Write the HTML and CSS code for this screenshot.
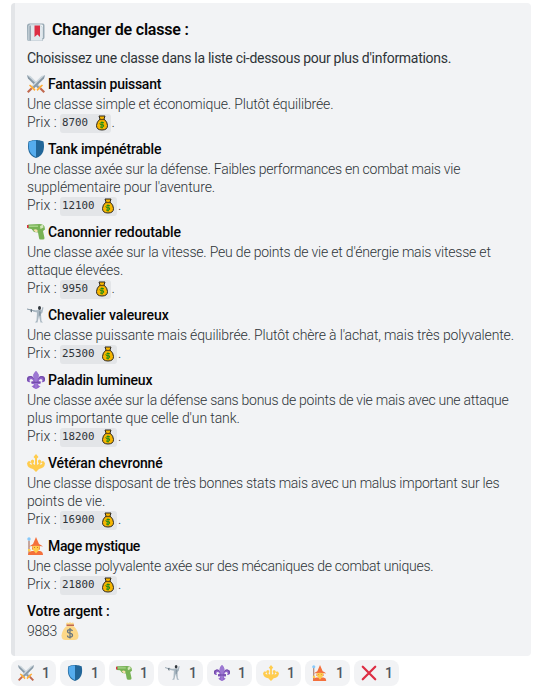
FILE: index.html
```html
<!DOCTYPE html>
<html lang="fr">
<head>
<meta charset="utf-8">
<title>Changer de classe</title>
<link rel="stylesheet" href="styles.css">
</head>
<body>
<svg class="sprite" aria-hidden="true">
<symbol id="book" viewBox="0 0 36 36"><path fill="#99aab5" d="M5 1h27q3 0 3 4v24q0 4-4 4v3H4q-4 0-4-4V6q0-5 5-5"/><path fill="#f5f8fa" d="M6 3h24q2 0 2 3v24H4V6q0-2 2-3"/><path fill="#bdc9d1" d="M2 5h25q4 0 4 4v27H5q-4 0-4-4z"/><path fill="#e1e8ed" d="M8 6h19q3 0 3 3v26H8z"/><path fill="#99aab5" d="M5 5h3v30H5z"/><path fill="#dd2e44" d="M15 5h11v23l-5-5-6 5z"/></symbol>
<symbol id="swords" viewBox="0 0 36 36"><g id="blade"><path fill="#ccd6dd" d="M0 0l7 2 20 20-5 5L2 7z"/><path fill="#8899a6" d="M0 0l25 24-3 3L2 7z"/><path fill="#c1694f" d="M25 28l3-3 8 8-3 3z"/><path fill="#ffac33" d="M19 29l2 3 4-4 4-4 3-3-2-2-4 3-4 4z"/></g><use href="#blade" transform="matrix(-1 0 0 1 36 0)"/></symbol>
<symbol id="shield" viewBox="0 0 36 36"><path fill="#226699" d="M33 3c-7-3-15-3-15-3S10 0 3 3C0 18 3 31 18 36c15-5 18-18 15-33z"/><path fill="#55acee" d="M18 1v33C6 29 2 20 4 4c5-2 9-3 14-3z"/></symbol>
<symbol id="gun" viewBox="0 0 36 36"><path fill="#77b255" d="M1 6Q0 4 3 3l22-1q8 0 10 5l1 6-4 3 3 14q0 3-3 3h-5q-3 0-3-3l-2-11-8-1-5-6-7-1z"/><path fill="#a6d388" d="M4 5h18v3H4z"/><path fill="#f9dfb0" d="M13 14q4-3 8 0v4q-4 2-8-4"/><path fill="#dd2e44" d="M0 4h3v6H0z"/><path fill="#d6e8bd" d="M26 6l6-3 1 6-6 3z"/></symbol>
<symbol id="fencer" viewBox="0 0 36 36"><path fill="#8899a6" d="M0 5l16 4v2L0 7z"/><path fill="#66757f" d="M7 7l3-1v7L7 11z"/><path fill="#aab8c2" d="M12 9l11-1h6l2-6 2 1-2 10-3 3 1 14 3 3h-5l-3-13-3 13h-5l3-4 1-16-8-2z"/><path fill="#8899a6" d="M24 10l4 2-1 8-3-1z"/><ellipse cx="25" cy="4" rx="3" ry="4" fill="#31373d"/></symbol>
<symbol id="lis" viewBox="0 0 36 36"><path fill="#9266cc" d="M18 0q-7 7-5 12l3 8q-3-11-10-10-7 1-6 8 1 6 7 4-4-4 1-6 4 0 5 5H9v5h5q-1 5-5 4 4 5 9 6 5-1 9-6-4 1-5-4h5v-5h-4q1-5 5-5 5 2 1 6 6 2 7-4 1-7-6-8-7-1-10 10l3-8q2-5-5-12"/><path fill="#744eaa" d="M0 18q-1-7 6-8 6-1 8 7-6-7-10-3-2 3 0 7-4 0-4-3m36 0q1-7-6-8-6-1-8 7 6-7 10-3 2 3 0 7 4 0 4-3M9 21h18v3H9z"/><path fill="#9c78d2" d="M18 0q-8 7-4 13l2 8h4l2-8q4-6-4-13m-3 24h6l-1 9-2 3-2-3z"/></symbol>
<symbol id="trident" viewBox="0 0 36 36"><path fill="#ffcc4d" d="M18 0l5 6-3 3v13q3-1 4-4l-2-1V13l3-2 3 2 1 3-2 2q0 2-1 4 4-1 5-4l-3 0 3-4 3 1 2 4q-1 9-12 11l-2 2-4 4-4-4-2-2Q1 28 0 19l2-4 3-1 3 4H5q1 3 5 4-1-2-1-4l-2-2 1-3 3-2 3 2v4l-2 1q1 3 4 4V9l-3-3z"/></symbol>
<symbol id="mage" viewBox="0 0 36 36"><path fill="#9a5a48" d="M3 7h2v29H3z"/><circle cx="4" cy="4" r="3.500" fill="#88c9f9"/><path fill="#f4703c" d="M2 36q0-7 8-8h16q6 1 6 8z"/><path fill="#e75a25" d="M11 17h14l1 8H10z"/><path fill="#ffcc4d" d="M11 17h14v4q0 8-7 8t-7-8z"/><path fill="#f4703c" d="M4 19q4-3 8-5l6-14 6 14q5 2 8 5-14-3-28 0"/><circle cx="15" cy="21" r="1" fill="#b55a2b"/><circle cx="21" cy="21" r="1" fill="#b55a2b"/><path fill="#ffcc4d" d="M14 28l4 5 4-5zM2 24h5v5H2z"/></symbol>
<symbol id="cross" viewBox="0 0 36 36"><path fill="none" stroke="#dd2e44" stroke-width="5" stroke-linecap="round" d="M4 4l28 28M32 4L4 32"/></symbol>
<symbol id="bag" viewBox="0 0 36 36"><path fill="#fdd888" d="M10 9q8-4 16 0 8 8 9 18 0 9-8 9H9q-8 0-8-9Q2 17 10 9"/><path fill="#fdd888" d="M11 6Q9 1 13 1q2 2 5-1 3 3 5 1 4 0 2 5z"/><path fill="#bf6952" d="M11 5h15v3H11z"/><path fill="none" stroke="#67757f" stroke-width="2.500" d="M23 18q-1-3-5-3-5 0-5 3.500 0 3.500 5 4t5 4-5 4-5-3.500M18 12v21"/></symbol>
<symbol id="coinbag" viewBox="0 0 12 16"><path fill="#f7b500" stroke="#2d2924" d="M3 1h6L8 4q3.500 3 3.500 6.500Q11.500 15 6 15T.5 10.500Q.5 7 4 4z"/><path stroke="#6b4c12" stroke-width="1.200" d="M3.500 4.500h5"/><path fill="none" stroke="#178a17" d="M8 7.800Q4 6.500 4 8.500t2 1.300 1.700 1.400Q7.500 13 4 12M6 6.500v7"/></symbol>
</svg>
<main class="embed">
<h1 class="title track-20"><svg class="emoji"><use href="#book"/></svg>Changer de classe :</h1>
<p class="intro track-29">Choisissez une classe dans la liste ci-dessous pour plus d'informations.</p>
<section class="field"><h2 class="track-27"><svg class="emoji"><use href="#swords"/></svg>Fantassin puissant</h2>
<p class="track-16">Une classe simple et économique. Plutôt équilibrée.</p><p class="price">Prix : <code>8700 <svg class="coin"><use href="#coinbag"/></svg></code>.</p></section>
<section class="field"><h2 class="track-16"><svg class="emoji"><use href="#shield"/></svg>Tank impénétrable</h2>
<p class="track-25">Une classe axée sur la défense. Faibles performances en combat mais vie<br><span class="track-11">supplémentaire pour l'aventure.</span></p><p class="price">Prix : <code>12100 <svg class="coin"><use href="#coinbag"/></svg></code>.</p></section>
<section class="field"><h2 class="track-8"><svg class="emoji"><use href="#gun"/></svg>Canonnier redoutable</h2>
<p class="track-20">Une classe axée sur la vitesse. Peu de points de vie et d'énergie mais vitesse et<br>attaque élevées.</p><p class="price">Prix : <code>9950 <svg class="coin"><use href="#coinbag"/></svg></code>.</p></section>
<section class="field"><h2 class="track-8"><svg class="emoji"><use href="#fencer"/></svg>Chevalier valeureux</h2>
<p class="track-15">Une classe puissante mais équilibrée. Plutôt chère à l'achat, mais très polyvalente.</p><p class="price">Prix : <code>25300 <svg class="coin"><use href="#coinbag"/></svg></code>.</p></section>
<section class="field"><h2 class="track-20"><svg class="emoji"><use href="#lis"/></svg>Paladin lumineux</h2>
<p class="track-27">Une classe axée sur la défense sans bonus de points de vie mais avec une attaque<br><span class="track-11">plus importante que celle d'un tank.</span></p><p class="price">Prix : <code>18200 <svg class="coin"><use href="#coinbag"/></svg></code>.</p></section>
<section class="field"><h2 class="track-15"><svg class="emoji"><use href="#trident"/></svg>Vétéran chevronné</h2>
<p class="track-25">Une classe disposant de très bonnes stats mais avec un malus important sur les<br><span class="track-16">points de vie.</span></p><p class="price">Prix : <code>16900 <svg class="coin"><use href="#coinbag"/></svg></code>.</p></section>
<section class="field"><h2 class="track-34"><svg class="emoji"><use href="#mage"/></svg>Mage mystique</h2>
<p class="track-25">Une classe polyvalente axée sur des mécaniques de combat uniques.</p><p class="price">Prix : <code>21800 <svg class="coin"><use href="#coinbag"/></svg></code>.</p></section>
<section class="field"><h2 class="track-15">Votre argent :</h2><p class="money track-27">9883 <svg class="emoji"><use href="#bag"/></svg></p></section>
</main>
<div class="reactions">
<div class="reaction"><svg><use href="#swords"/></svg>1</div><div class="reaction"><svg><use href="#shield"/></svg>1</div><div class="reaction"><svg><use href="#gun"/></svg>1</div><div class="reaction"><svg><use href="#fencer"/></svg>1</div><div class="reaction"><svg><use href="#lis"/></svg>1</div><div class="reaction"><svg><use href="#trident"/></svg>1</div><div class="reaction"><svg><use href="#mage"/></svg>1</div><div class="reaction"><svg><use href="#cross"/></svg>1</div>
</div>
</body>
</html>
```
FILE: styles.css
```css
* { box-sizing: border-box; }
body { margin: 0; padding: 3px 12px 0 11px; background: #fff; font-family: Roboto, "Liberation Sans", sans-serif; font-size: 14px; line-height: 18px; color: #2e3338; }
.sprite { display: none; }
.embed { height: 653px; padding: 16px 12px 16px; border-left: 4px solid #e3e5e8; border-radius: 4px; background: #f2f3f5; white-space: nowrap; }
h1, h2, p { margin: 0; }
.title { display: flex; align-items: center; gap: 7px; height: 22px; font-size: 16px; font-weight: 600; color: #060607; }
.title .emoji { margin-top: 4px; }
.intro { margin: 8px 0 8px; }
.emoji { width: 18px; height: 18px; flex: none; }
.field { margin-bottom: 9px; font-weight: 300; }
.field h2 { display: flex; align-items: center; gap: 3px; height: 18px; margin-bottom: 2px; font-size: 14px; font-weight: 500; color: #060607; }
.price { display: flex; align-items: center; height: 18px; white-space: pre; }
code { display: flex; align-items: center; height: 19px; margin: 2px 1px 0 0; padding: 0 3px 0 2px; border-radius: 3px; background: #e3e5e8; font: 400 10.8px/18px "DejaVu Sans Mono", monospace; white-space: pre; }
.coin { width: 12px; height: 16px; margin-left: 1px; }
.money { display: flex; align-items: center; gap: 4px; height: 18px; }
.reactions { display: flex; gap: 4px; margin-top: 4px; }
.reaction { display: flex; align-items: center; gap: 8px; width: 45px; height: 26px; padding-left: 7px; border-radius: 8px; background: #f2f3f5; font-weight: 500; color: #4f5660; }
.reaction svg { width: 16px; height: 16px; }
.track-8 { letter-spacing: -.08px; }
.track-11 { letter-spacing: -.11px; }
.track-15 { letter-spacing: -.15px; }
.track-16 { letter-spacing: -.16px; }
.track-20 { letter-spacing: -.2px; }
.track-25 { letter-spacing: -.253px; }
.track-27 { letter-spacing: -.27px; }
.track-29 { letter-spacing: -.29px; }
.track-34 { letter-spacing: -.34px; }
```
